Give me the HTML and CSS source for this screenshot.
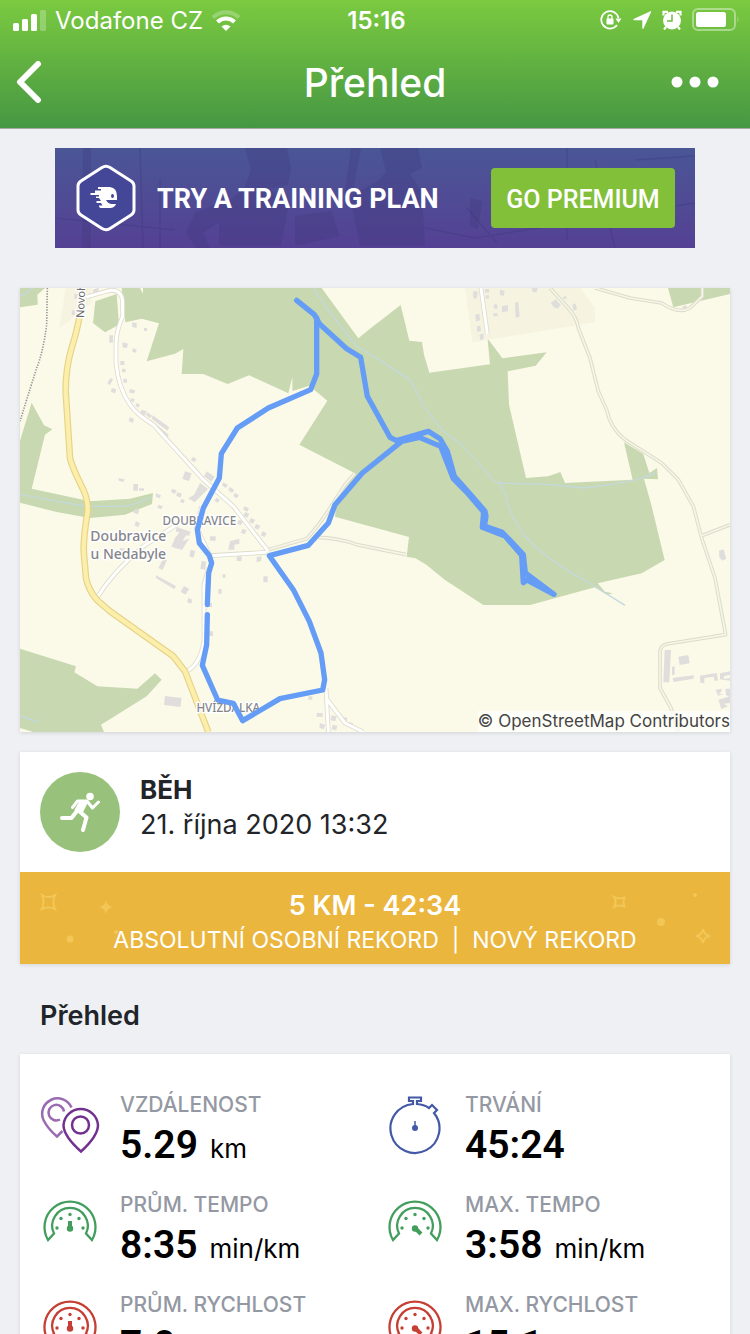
FILE: index.html
```html
<!DOCTYPE html>
<html lang="cs">
<head>
  <meta charset="UTF-8">
  <meta name="viewport" content="width=device-width, initial-scale=1.0">
  <title>Přehled</title>
  <link rel="stylesheet" href="styles.css">
</head>
<body>

  <header class="top">
    <div class="status-bar">
      <div class="status-left">
        <svg width="34" height="22" viewBox="0 0 34 22" fill="#fff">
          <rect x="0" y="14" width="6" height="8" rx="1.5"/>
          <rect x="9" y="10" width="6" height="12" rx="1.5"/>
          <rect x="18" y="5" width="6" height="17" rx="1.5"/>
          <rect x="27" y="1" width="6" height="21" rx="1.5" opacity=".25"/>
        </svg>
        <span class="carrier">Vodafone CZ</span>
        <svg width="30" height="22" viewBox="0 0 30 22" fill="none" stroke="#fff" stroke-width="4">
          <path d="M2 8.500a18.500 18.500 0 0 1 26 0" opacity=".25"/>
          <path d="M6.500 13a12.200 12.200 0 0 1 17 0"/>
          <path d="M15 22l-4.500-4.500a6.500 6.500 0 0 1 9 0z" fill="#fff" stroke="none"/>
        </svg>
      </div>
      <span class="clock">15:16</span>
      <div class="status-right">
        <svg width="22" height="22" viewBox="0 0 22 22">
          <path d="M18.500 9A8.700 8.700 0 1 0 17 16" fill="none" stroke="#fff" stroke-width="1.800"/>
          <path d="M15.500 9.500h6l-3 4.500z" fill="#fff"/>
          <rect x="6.500" y="9.500" width="7" height="6" rx=".8" fill="#fff"/>
          <path d="M8 10V8a2 2 0 0 1 4 0v2" fill="none" stroke="#fff" stroke-width="1.300"/>
        </svg>
        <svg width="20" height="20" viewBox="0 0 20 20" fill="#fff"><path d="M18.500 1.200Q19.500 1 19 2.200L11.500 18.500Q10.500 19.500 10.300 18V10.200H2Q.5 9.500 2 8.700z"/></svg>
        <svg width="20" height="20" viewBox="0 0 20 20">
          <path d="M4 17l-2 2.500M16 17l2 2.500M1.500 5.500V1.800H6M14 1.800h4.500v3.700" fill="none" stroke="#fff" stroke-width="2.200"/>
          <circle cx="10" cy="10.500" r="9" fill="#fff"/>
          <path d="M10 4.500v6.500H5" fill="none" stroke="#6dbb3e" stroke-width="1.500"/>
        </svg>
        <svg width="48" height="24" viewBox="0 0 48 24">
          <rect x="1" y="1" width="42" height="21" rx="5" fill="none" stroke="#fff" stroke-width="2" opacity=".4"/>
          <rect x="4" y="4" width="30" height="15" rx="2.500" fill="#fff"/>
          <path d="M45.500 8q2 3.500 0 7z" fill="#fff" opacity=".4"/>
        </svg>
      </div>
    </div>
    <div class="nav-bar">
      <button class="nav-button" aria-label="Zpět">
        <svg width="26" height="42" viewBox="0 0 26 42" fill="none" stroke="#fff" stroke-width="6" stroke-linecap="round"><path d="M22 3L4 21l18 18" stroke-linejoin="round"/></svg>
      </button>
      <h1>Přehled</h1>
      <button class="nav-button nav-more" aria-label="Další možnosti">
        <svg width="48" height="12" viewBox="0 0 48 12" fill="#fff"><circle cx="6" cy="6" r="5.500"/><circle cx="24" cy="6" r="5.500"/><circle cx="42" cy="6" r="5.500"/></svg>
      </button>
    </div>
  </header>

  <main>
    <section class="banner">
      <svg class="banner-bg" viewBox="0 0 640 100" preserveAspectRatio="none">
        <g fill="#3b3578" opacity=".25">
          <path d="M190 0h42l4 20-3 17-19 4 20 15-8 42H164V60l25-19 7-19z"/>
          <path d="M325 0h38l4 20-12 6 12 18 3 54h-65l-10-50 28-15 8-9z"/>
          <path d="M164 55l-24 10-9 20 10 15h14l-7-15 24-16zM240 68l36-5 9 25-45 10zM296 0h10l-8 43h-8z"/>
          <path d="M28 0h8v100h-9zM415 50l12 3-4 28-8-3z"/>
        </g>
        <path d="M85 0l3 100M105 30v70M512 0v92M412 60l30 35M540 12l20 88M0 70l120 12M370 80l50 10 220-35M580 12l60-4" fill="none" stroke="#3b3578" stroke-width="1.500" opacity=".3"/>
      </svg>
      <svg class="banner-logo" width="62" height="68" viewBox="0 0 62 68">
        <path d="M27 3.500q4-2.500 8 0l21 13.500q3 2 3 5v24q0 3-3 5l-21 13.500q-4 2.500-8 0L6 51q-3-2-3-5V22q0-3 3-5z" fill="#444798" stroke="#fff" stroke-width="3"/>
        <path d="M23 23h12q7 1 7 9v4H31q2 4 6 4h4q-1 3-5 4H25.500q-2-1-1.500-2.500h3.500l-1.500-2.500h-4.500v-2h4.500l-2-3h-3v-1.500h3V31H15.500v-2H20v-2.500h6V25h-3z" fill="#fff"/>
        <ellipse cx="37.500" cy="32" rx="1.500" ry="2" fill="#444798"/>
      </svg>
      <span class="banner-text">TRY A TRAINING PLAN</span>
      <button class="premium">GO PREMIUM</button>
    </section>

    <section class="map-card">
      <svg class="map" viewBox="0 0 2130 1332">
        <rect width="2130" height="1332" fill="#fbfae8"/>
        <!-- residential areas -->
        <path d="M137 0L118 121L215 45V0zM1335 0L1357 163L1725 103V60L1680 0z" fill="#f6f4e0"/>
        <!-- woods -->
        <g fill="#c8d8b0">
          <path d="M305 0L316 103L365 92L417 106L380 220L465 197L490 183L485 258H550L623 288L687 262L805 316L817 267V309L868 293L922 338L838 470L1005 556L950 641L945 686L1167 747L1160 806L1187 811L1220 831L1275 876L1390 951H1530L1725 898L1762 921L1778 916L1755 911L1733 886L1865 856L1934 816L1894 651L1872 572L1914 574L1911 540L1888 555L1870 498L1812 463L1838 575L1635 585L1621 552L1585 565L1518 570L1467 350L1463 250L1547 233L1580 193L1447 211L1407 157H1403L1410 229L1228 254L1212 200L1206 162L1168 158L1142 51L1050 122L1015 151L905 0z"/>
          <path d="M226 40L290 18L297 110L255 133L219 105zM0 0H75L52 20L53 50L0 58z"/>
          <path d="M0 458L35 344L72 412L97 424L75 440L35 602L210 640L330 632L399 615L396 648L315 680L210 690L110 672L0 644z"/>
          <path d="M0 1082L168 1135L163 1153L232 1195L352 1202L405 1156L425 1175L380 1225L243 1310L252 1332H40L0 1320zM1944 0L1960 58L2130 18V0z"/>
        </g>
        <path d="M360 0l9 17V0z" fill="#fbfae8"/>
        <!-- streams -->
        <path d="M880 0L920 60L1010 175L1080 217L1172 277L1215 360L1265 425L1325 470L1422 578L1437 585L1590 590L1690 600L1770 590L1850 575L1905 555M1437 585L1455 615Q1475 710 1540 770T1700 880L1815 952M0 619L180 652Q290 660 340 650L395 627M0 24l12-4L38 0M0 1284L55 1302" class="stream"/>
        <!-- railway -->
        <path d="M82 0L80 110Q70 190 50 240L20 335L0 400" class="rail"/>
        <!-- buildings -->
        <g fill="#e0dedc">
          <path d="M163 18h11v14h-11zM155 67h11v14h-11zM218 5l18-6v14l-16 4zM268 142h11v22h-11zM336 103l14 3v14l-13-3zM308 162l16 5-4 14-13-4zM340 180l11 6-5 9-10-5zM372 120h9v9h-9zM301 219h12v12h-12zM306 242h11v11h-11zM310 272h11v12h-11zM271 270l8 4-9 18-8-6zM275 300l14 4-4 12-12-4zM330 303l16 4-4 10-15-4zM334 330l10 4-3 9-10-4zM350 345l10 5-5 9-9-5zM330 388l12 5-4 12-12-6z"/>
          <path d="M365 365l15 5-6 13-14-7zM382 373l14 10-5 8-13-9zM398 382l50 36-6 10-47-36zM392 395l54 45-5 8-52-42zM518 507l12 6-7 10-10-7zM495 550l20 6-8 23-20-6zM340 588h14v20h-14zM296 570l18 4-4 8-14-4zM357 601h15v7h-15zM408 616l15 6-4 9-12-5z"/>
          <path d="M560 550l24 16-10 15-22-16zM540 585l24 18-40 40-20-12 18-10zM610 583l14 8-7 9-11-8zM629 597l14 8-7 10-11-9zM645 614l12 8-7 9-10-7zM456 602l14 5-5 11-12-6zM472 612l14 5-5 12-12-6zM485 632l10 5-5 9-10-5zM590 629l10 6-7 9-10-6zM672 655l15 5-5 11-12-6z"/>
          <path d="M470 717l42 14-5 13-40-14zM465 750l20-25 18 9-15 25 20-8-22 35-32-10 5-12zM415 650l14 5-5 9-12-5zM408 862l60 32-5 10-55-34zM492 894l16 9-12 17-14-9zM505 930l13 5-5 12-12-5zM630 760l28-8v16l-15 2v15h-18zM570 745h17v13h-17zM650 805h15v14h-15zM710 808l14-4v15l-14 4zM545 818l14 3-4 24-14-3zM512 785l14 4-6 20-12-4zM608 858h8v12h-8zM595 903h10v14h-10zM730 865h13v18h-13zM556 945h20v12h-20zM567 1030h12v14h-12z"/>
          <path d="M675 672l13 5-6 12-12-5zM692 690l13 5-6 12-12-5zM708 708l13 5-6 12-12-5zM728 730l12 5-6 12-12-5zM657 695l12 5-6 12-12-5zM668 722l12 5-6 12-12-5zM344 662l14 5-4 12-13-4zM348 700l12 5-5 12-12-5zM300 780l15 2-5 12-13-4zM415 840l14-28 12 4-13 30zM435 1224l50 6-4 27-49-6z"/>
          <path d="M890 1275h18v11h-18zM935 1282l15 3-4 15-15-3zM900 1305l16 5-5 14-13-5zM938 1310l14 3-3 14-14-3zM960 1285l22 5-3 12-20-5zM985 1302l14 4-3 12-14-4zM865 1225h12v10h-12z"/>
          <path d="M1360 8l14 3-4 22-11-4zM1395 3h12v11h-12zM1397 22h10v10h-10zM1440 5l14 3-2 15-13-2zM1423 47l9 3v14l-12-4zM1446 54l18-3v19l-18 3zM1420 76h13v9h-13zM1485 44l10-3 4 45-12 3zM1365 80l13-3 3 20-13 3zM1371 115l10-2 2 16-12 2zM1378 140l13-4v16l-10 5zM1535 0h18l-3 13h-12zM1592 45l15-11 15 16-9 12-12-4zM1657 50l10-4 4 18-10 4zM1630 25h9v8h-9zM1988 55l12-3v8l-12 3z"/>
          <path d="M2097 788l14-4 8 28-12 6-9-10zM1934 1086h19l-5 97h-18zM1975 1106l30-5 4 25-30 5zM1956 1137l8-2v25l-8 1zM1958 1170l63-8v10l-60 10zM2040 1163l50-8 4 22-10 3-3-14-28 4v16l-12-2zM2100 1156l30-6v10l-18 5v8l18-3v8l-30-4zM2087 1205l18-3v8l-8 8h15l-18 5zM2116 1202h14v25l-12-6zM2095 1235l35-10v20l-18 2 12 8-20 8z"/>
        </g>
        <!-- minor paths -->
        <path class="path-casing" d="M745 785L860 752Q895 715 930 660L975 590L1005 556M895 748Q960 750 1010 770L1158 800M1590 0L1640 55Q1670 85 1675 120L1710 210L1735 310L1760 365Q1770 420 1815 455L1925 525L1975 575L2020 655L2045 750L2085 870L2117 1040L1940 1068Q1922 1073 1920 1090V1200L1953 1260L1975 1332M1725 0L1830 30L1925 45Q1975 80 2010 60L2047 25V0M2045 743L2130 710"/>
        <path class="path-fill" d="M745 785L860 752Q895 715 930 660L975 590L1005 556M895 748Q960 750 1010 770L1158 800M1590 0L1640 55Q1670 85 1675 120L1710 210L1735 310L1760 365Q1770 420 1815 455L1925 525L1975 575L2020 655L2045 750L2085 870L2117 1040L1940 1068Q1922 1073 1920 1090V1200L1953 1260L1975 1332M1725 0L1830 30L1925 45Q1975 80 2010 60L2047 25V0M2045 743L2130 710"/>
        <!-- streets -->
        <path class="street-casing" d="M195 28L270 7Q305 5 308 40V85Q288 130 288 170V225Q295 300 330 350Q350 380 400 410L550 575L640 655L745 790M545 655L530 720L570 803L740 793M566 840L552 890V1060Q540 1130 500 1150M230 930Q280 850 370 775L470 710M918 1200L925 1332M918 1230L975 1305L1030 1332M1383 0L1402 138"/>
        <path class="street" d="M195 28L270 7Q305 5 308 40V85Q288 130 288 170V225Q295 300 330 350Q350 380 400 410L550 575L640 655L745 790M545 655L530 720L570 803L740 793M566 840L552 890V1060Q540 1130 500 1150M230 930Q280 850 370 775L470 710M918 1200L925 1332M918 1230L975 1305L1030 1332M1383 0L1402 138"/>
        <path class="main-casing" d="M190 0L178 88Q172 125 155 180Q137 240 137 310L150 510Q155 535 190 605Q205 640 203 670Q188 760 192 800L198 870Q205 905 230 935L270 970L460 1105L495 1150L565 1332"/>
        <path class="main-road" d="M190 0L178 88Q172 125 155 180Q137 240 137 310L150 510Q155 535 190 605Q205 640 203 670Q188 760 192 800L198 870Q205 905 230 935L270 970L460 1105L495 1150L565 1332"/>
        <!-- place names -->
        <g class="place">
          <text x="192" y="90" class="place-road" transform="rotate(-88 192 90)">Novoh</text>
          <text x="538" y="711" class="place-small">DOUBRAVICE</text>
          <text x="625" y="1273" class="place-small">HVÍZDALKA</text>
          <text x="325" y="760" class="place-town">Doubravice</text>
          <text x="325" y="814" class="place-town">u Nedabyle</text>
        </g>
        <!-- recorded track -->
        <g class="track">
          <path d="M830 37L883 80L898 107L980 182L1022 208L1042 325L1110 448L1130 458L1225 430L1260 452L1282 490L1303 565L1345 612L1395 670L1398 685L1393 714L1445 732L1465 752L1510 800L1516 855L1602 919L1520 876L1510 884L1505 802L1455 744L1387 718L1391 672L1345 618L1300 572L1262 475L1198 448L1145 460L1027 555L945 650L925 705L865 772L748 803L820 905L868 1000L903 1095L914 1175L908 1206L780 1232L668 1298L640 1246L593 1236L547 1132L560 1070L562 980"/>
          <path d="M562 950L566 855L575 825L568 803L538 765L532 725L550 660L598 570L604 497L652 420L745 360L872 305L890 258V90"/>
        </g>
      </svg>
      <a class="attribution" href="#">© OpenStreetMap Contributors</a>
    </section>

    <section class="card">
      <div class="workout">
        <div class="sport">
          <svg width="40" height="40" viewBox="0 0 40 40" fill="none" stroke="#fff" stroke-linecap="round" stroke-linejoin="round">
            <circle cx="30" cy="4.500" r="3.800" fill="#fff" stroke="none"/>
            <path d="M12.500 15.500L17.500 9H27l5.500 7L38.500 10" stroke-width="3"/>
            <path d="M20 10h7l-5.500 11-6-3z" fill="#fff" stroke-width="2"/>
            <path d="M17 19l-5.500 7H2M19 19l7.500 6.500L23 38" stroke-width="4"/>
          </svg>
        </div>
        <div>
          <h2 class="workout-name">BĚH</h2>
          <p class="workout-date">21. října 2020 13:32</p>
        </div>
      </div>
      <div class="record">
        <svg class="sparkles sparkles-left" width="110" height="92" viewBox="0 0 110 92" fill="#f2c757">
          <path d="M22 23q7 4 13 0-3 7 0 14-7-3-13 0 3-7 0-14z" fill="none" stroke="#f2c757" stroke-width="2"/>
          <path d="M86 28q1 6 7 7-6 1-7 7-1-6-7-7 6-1 7-7z"/>
          <circle cx="50" cy="67" r="3.500"/><circle cx="96" cy="60" r="2"/>
        </svg>
        <svg class="sparkles sparkles-right" width="120" height="92" viewBox="0 0 120 92" fill="#f2c757">
          <path d="M4 25q6 3 11 0-3 5 0 10-5-3-11 0 3-5 0-10zM93 57q1 6 7 7-6 1-7 7-1-6-7-7 6-1 7-7z" fill="none" stroke="#f2c757" stroke-width="2"/>
          <circle cx="51" cy="50" r="4"/><circle cx="85" cy="23" r="2"/>
        </svg>
        <strong>5 KM - 42:34</strong>
        <p>ABSOLUTNÍ OSOBNÍ REKORD&nbsp; |&nbsp; NOVÝ REKORD</p>
      </div>
    </section>

    <h2 class="section-title">Přehled</h2>

    <section class="card stats">
      <div class="stat">
        <svg class="stat-icon" viewBox="0 0 60 60" fill="none" stroke-width="2.500">
          <g stroke="#9a6bb0"><path d="M31.500 11.500A15.300 15.300 0 1 0 3.500 24Q8 33 17 40.500L22.500 35"/><path d="M24 15.500a7.800 7.800 0 1 0-4 8"/></g>
          <path d="M41 55.500Q23.500 40 23.500 29a17.300 17.300 0 0 1 34.500 0Q58 40 41 55.500z" stroke="#72308f"/><circle cx="40.500" cy="29" r="8.500" stroke="#72308f"/>
        </svg>
        <div><h3>VZDÁLENOST</h3><p><b>5.29</b> km</p></div>
      </div>
      <div class="stat">
        <svg class="stat-icon" viewBox="0 0 60 60" fill="none" stroke="#4359a8" stroke-width="2.200">
          <path d="M28 8V5h-4V1.500h12V5h-4v3q7 .5 12 4l3-3 5 5-3 3a24.500 24.500 0 1 1-21-9z"/>
          <path d="M30 25v6" stroke-width="1.500"/><circle cx="30" cy="32" r="3" fill="#4359a8" stroke="none"/>
        </svg>
        <div><h3>TRVÁNÍ</h3><p><b>45:24</b></p></div>
      </div>
      <div class="stat">
        <svg class="stat-icon gauge-green" viewBox="0 0 60 60"><use href="#gauge"/><path class="needle" d="M30 25v7"/></svg>
        <div><h3>PRŮM. TEMPO</h3><p><b>8:35</b> min/km</p></div>
      </div>
      <div class="stat">
        <svg class="stat-icon gauge-green" viewBox="0 0 60 60"><use href="#gauge"/><path class="needle" d="M30 32l6 6"/></svg>
        <div><h3>MAX. TEMPO</h3><p><b>3:58</b> min/km</p></div>
      </div>
      <div class="stat">
        <svg class="stat-icon gauge-red" viewBox="0 0 60 60"><use href="#gauge"/><path class="needle" d="M30 25v7"/></svg>
        <div><h3>PRŮM. RYCHLOST</h3><p><b>7.0</b></p></div>
      </div>
      <div class="stat">
        <svg class="stat-icon gauge-red" viewBox="0 0 60 60"><use href="#gauge"/><path class="needle" d="M30 32l6 6"/></svg>
        <div><h3>MAX. RYCHLOST</h3><p><b>15.1</b></p></div>
      </div>
    </section>
  </main>

  <svg width="0" height="0" class="defs">
    <symbol id="gauge" viewBox="0 0 60 60">
      <path d="M14 37.500A17.800 17.800 0 1 1 46 37.500L52 44A25.500 25.500 0 1 0 8 44z" fill="none" stroke="currentColor" stroke-width="2.300"/>
      <g fill="currentColor"><circle cx="30" cy="32.500" r="3.200"/><circle cx="17" cy="32" r="1.700"/><circle cx="21" cy="22.500" r="1.700"/><circle cx="30" cy="18.500" r="1.700"/><circle cx="39" cy="22.500" r="1.700"/><circle cx="43" cy="32" r="1.700"/></g>
    </symbol>
  </svg>

</body>
</html>
```
FILE: styles.css
```css
* {
  margin: 0;
  padding: 0;
  box-sizing: border-box;
}

body {
  display: flex;
  flex-direction: column;
  height: 100vh;
  overflow: hidden;
  font-family: Inter, "Liberation Sans", sans-serif;
  background-color: #eff0f3;
  color: #212529;
}

svg {
  display: block;
}

button {
  border: none;
  background: none;
  cursor: pointer;
}

/* Header */
.top {
  flex: none;
  color: #fff;
  background: linear-gradient(#7bca40, #469743);
  border-bottom: 1px solid #a5aaa5;
}

.status-bar {
  display: grid;
  grid-template-columns: 1fr auto 1fr;
  align-items: center;
  height: 40px;
  padding: 0 10px 0 13px;
  font-size: 24px;
}

.status-left,
.status-right {
  display: flex;
  align-items: center;
  gap: 8px;
}

.status-right {
  justify-content: flex-end;
  gap: 10px;
}

.clock {
  font-weight: 600;
}

.nav-bar {
  display: grid;
  grid-template-columns: 80px 1fr 80px;
  align-items: center;
  height: 88px;
  padding: 0 16px 4px;
}

.nav-bar h1 {
  font-size: 39px;
  font-weight: 500;
  text-align: center;
}

.nav-button {
  display: flex;
  padding: 8px 0;
}

.nav-more {
  justify-content: flex-end;
  padding-right: 15px;
}

/* Content */
main {
  flex: 1;
  overflow-y: auto;
  scrollbar-width: none;
  padding: 19px 20px;
}

.banner {
  position: relative;
  display: flex;
  align-items: center;
  max-width: 640px;
  height: 100px;
  margin: 0 auto 40px;
  padding: 0 20px;
  background: linear-gradient(#4a5696, #554194);
}

.banner-bg {
  position: absolute;
  inset: 0;
  width: 100%;
  height: 100%;
}

.banner-logo,
.banner-text,
.premium {
  position: relative;
}

.banner-text {
  padding-top: 2px;
  margin-left: 20px;
  color: #fff;
  font-family: Roboto, sans-serif;
  font-size: 27px;
  font-weight: 700;
  white-space: nowrap;
}

.premium {
  width: 184px;
  height: 60px;
  padding-top: 2px;
  margin-left: auto;
  border-radius: 4px;
  background-color: #82c03a;
  color: #fff;
  font-family: Roboto, sans-serif;
  font-size: 25px;
  font-weight: 500;
}

.card,
.map-card {
  margin-bottom: 20px;
  background-color: #fff;
  box-shadow: 0 1px 4px rgba(0, 0, 0, 0.12);
}

/* Map */
.map-card {
  position: relative;
}

.map {
  width: 100%;
  height: auto;
}

.stream {
  fill: none;
  stroke: #c4d9dc;
  stroke-width: 4;
}

.rail {
  fill: none;
  stroke: #999;
  stroke-width: 5;
  stroke-dasharray: 4 4;
}

.path-casing,
.path-fill,
.street-casing,
.street,
.main-casing,
.main-road {
  fill: none;
  stroke-linejoin: round;
}

.path-casing {
  stroke: #dbdccb;
  stroke-width: 11;
}

.path-fill {
  stroke: #f6f5e6;
  stroke-width: 5;
}

.street-casing {
  stroke: #dddccb;
  stroke-width: 14;
}

.street {
  stroke: #fff;
  stroke-width: 9;
}

.main-casing {
  stroke: #e6d389;
  stroke-width: 20;
}

.main-road {
  stroke: #fceeab;
  stroke-width: 13;
}

.track {
  fill: none;
  stroke: #659df6;
  stroke-width: 16;
  stroke-linecap: round;
  stroke-linejoin: round;
}

.place {
  font-family: "Noto Sans", sans-serif;
  fill: #85858a;
  stroke: #fff;
  stroke-width: 9;
  stroke-linejoin: round;
  paint-order: stroke;
  text-anchor: middle;
}

.place-small {
  font-size: 35px;
  font-weight: 500;
}

.place-town {
  font-size: 42px;
  font-weight: 500;
}

.place-road {
  font-size: 33px;
  text-anchor: start;
  fill: #666;
}

.attribution {
  position: absolute;
  right: 0;
  bottom: 0;
  padding-bottom: 1px;
  background-color: rgba(255, 255, 255, 0.7);
  color: #444;
  font-size: 17px;
  line-height: 20px;
  text-decoration: none;
}

/* Workout */
.workout {
  display: flex;
  gap: 20px;
  padding: 20px;
}

.sport {
  display: flex;
  align-items: center;
  justify-content: center;
  width: 80px;
  height: 80px;
  border-radius: 50%;
  background-color: #98c27c;
}

.workout-name {
  font-size: 26px;
  font-weight: 700;
  line-height: 36px;
}

.workout-date {
  font-size: 27px;
  line-height: 34px;
}

.record {
  position: relative;
  padding: 16px 0 8px;
  background-color: #eab63e;
  color: #fff;
  text-align: center;
}

.record strong {
  display: block;
  font-size: 27px;
  font-weight: 600;
  line-height: 36px;
}

.record p {
  position: relative;
  font-size: 23px;
  line-height: 32px;
}

.sparkles {
  position: absolute;
  top: 0;
}

.sparkles-left {
  left: 0;
}

.sparkles-right {
  right: 0;
}

/* Statistics */
.section-title {
  padding: 13px 20px 19px;
  font-size: 27px;
  font-weight: 600;
  line-height: 38px;
}

.stats {
  display: grid;
  grid-template-columns: 1fr 1fr;
  row-gap: 20px;
  padding: 36px 0 20px 20px;
}

.stat {
  display: flex;
  gap: 20px;
  height: 80px;
}

.stat-icon {
  flex: none;
  width: 60px;
  height: 60px;
  margin-top: 6px;
}

.stat h3 {
  color: #9498a3;
  font-size: 21px;
  font-weight: 500;
  line-height: 30px;
}

.stat p {
  display: flex;
  align-items: baseline;
  gap: 12px;
  color: #000;
  font-size: 26px;
  line-height: 50px;
}

.stat b {
  font-family: Roboto, sans-serif;
  font-size: 39px;
  font-weight: 600;
}

.gauge-green {
  color: #439e5d;
}

.gauge-red {
  color: #c53f34;
}

.needle {
  fill: none;
  stroke: currentColor;
  stroke-width: 4;
}

.defs {
  position: absolute;
}
```
